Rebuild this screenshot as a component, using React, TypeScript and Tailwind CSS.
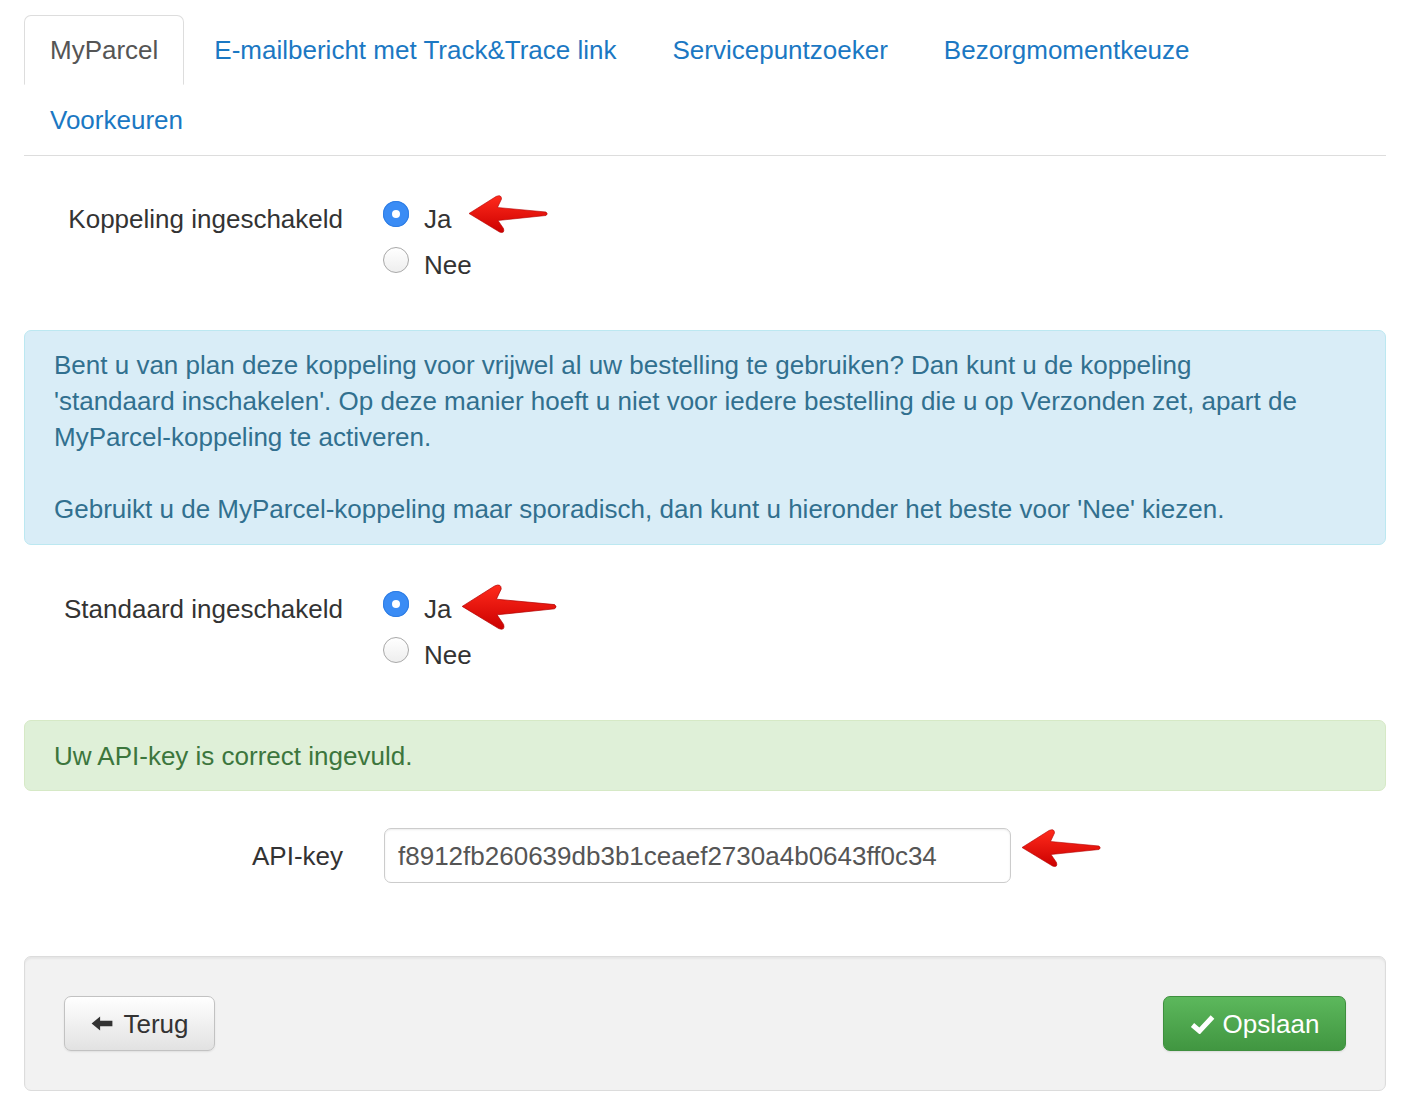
import React from "react";

const tabs = [
  { label: "MyParcel", active: true },
  { label: "E-mailbericht met Track&Trace link" },
  { label: "Servicepuntzoeker" },
  { label: "Bezorgmomentkeuze" },
];

function RedArrow({ className }: { className: string }) {
  return (
    <svg viewBox="0 0 80 40" className={className} aria-hidden>
      <defs>
        <linearGradient id="arrowFill" x1="0" y1="0" x2="0" y2="1">
          <stop offset="0" stopColor="#ff2b1c" />
          <stop offset="1" stopColor="#cc0000" />
        </linearGradient>
      </defs>
      <path
        d="M1 19.5 L28 2.5 Q33.5 0 33.5 5 L29.5 13.5 L78 18 Q80.5 20 78 21.5 L30 26.5 L35.5 34.5 Q37 40 31.5 38 Z"
        fill="url(#arrowFill)"
        stroke="#b30000"
        strokeWidth="0.6"
        strokeLinejoin="round"
      />
    </svg>
  );
}

function Radio({ checked, label }: { checked?: boolean; label: string }) {
  return (
    <div className="flex h-[36px] items-center">
      <span
        className={`-mt-[10px] flex h-[26px] w-[26px] shrink-0 items-center justify-center rounded-full ${
          checked
            ? "bg-[#3a8cf5] shadow-[inset_0_0_0_1px_#2f7de3]"
            : "border border-[#a8a8a8] bg-gradient-to-b from-white to-[#eeeeee]"
        }`}
      >
        {checked ? <span className="h-[8px] w-[8px] rounded-full bg-white" /> : null}
      </span>
      <span className="ml-[15px]">{label}</span>
    </div>
  );
}

function RadioGroup({ title, arrowClass }: { title: string; arrowClass: string }) {
  return (
    <div className="flex">
      <div className="w-[319px] text-right leading-[36px]">{title}</div>
      <div className="ml-[40px] flex flex-col gap-[10px]">
        <div className="relative">
          <Radio checked label="Ja" />
          <RedArrow className={arrowClass} />
        </div>
        <Radio label="Nee" />
      </div>
    </div>
  );
}

export default function App() {
  return (
    <div className="min-h-[1110px] bg-white pl-[24px] pr-[18px] pt-[15px] font-['Liberation_Sans',Arial,sans-serif] text-[26px] leading-[36px] text-[#333]">
      <ul className="flex flex-wrap border-b border-[#dddddd]">
        {tabs.map((tab) => (
          <li key={tab.label} className="mr-[4px]">
            <span
              className={`flex h-[70px] items-center rounded-t-[7px] border px-[25px] ${
                tab.active
                  ? "border-[#dddddd] border-b-transparent bg-white text-[#555]"
                  : "border-transparent text-[#1b78c3]"
              }`}
            >
              {tab.label}
            </span>
          </li>
        ))}
        <li className="h-0 basis-full" />
        <li>
          <span className="flex h-[70px] items-center px-[26px] text-[#1b78c3]">Voorkeuren</span>
        </li>
      </ul>

      <div className="mt-[45px]">
        <RadioGroup
          title="Koppeling ingeschakeld"
          arrowClass="absolute left-[84px] top-[-7px] h-[40px] w-[82px]"
        />
      </div>

      <div className="mt-[47px] rounded-[7px] border border-[#bce8f1] bg-[#d9edf7] px-[29px] pt-[16px] pb-[17px] text-[#31708f]">
        <p>
          Bent u van plan deze koppeling voor vrijwel al uw bestelling te gebruiken? Dan kunt u de koppeling
          <br />
          'standaard inschakelen'. Op deze manier hoeft u niet voor iedere bestelling die u op Verzonden zet, apart de
          <br />
          MyParcel-koppeling te activeren.
        </p>
        <p className="mt-[36px]">
          Gebruikt u de MyParcel-koppeling maar sporadisch, dan kunt u hieronder het beste voor 'Nee' kiezen.
        </p>
      </div>

      <div className="mt-[46px]">
        <RadioGroup
          title="Standaard ingeschakeld"
          arrowClass="absolute left-[78px] top-[-8px] h-[48px] w-[96px]"
        />
      </div>

      <div className="mt-[47px] flex h-[71px] items-center rounded-[7px] border border-[#d6e9c6] bg-[#dff0d8] px-[29px] text-[#3c763d]">
        Uw API-key is correct ingevuld.
      </div>

      <div className="mt-[37px] flex items-center">
        <div className="w-[319px] text-right">API-key</div>
        <div className="relative ml-[41px]">
          <div className="flex h-[55px] w-[627px] items-center rounded-[7px] border border-[#cccccc] bg-white px-[13px] text-[#555] shadow-[inset_0_1px_2px_rgba(0,0,0,0.08)]">
            f8912fb260639db3b1ceaef2730a4b0643ff0c34
          </div>
          <RedArrow className="absolute left-[636px] top-[0px] h-[40px] w-[82px]" />
        </div>
      </div>

      <div className="mt-[73px] flex items-center justify-between rounded-[7px] border border-[#dcdcdc] bg-[#f2f2f2] px-[39px] py-[39px] shadow-[inset_0_2px_2px_rgba(0,0,0,0.05)]">
        <button
          type="button"
          className="flex h-[55px] w-[151px] items-center justify-center gap-[9px] rounded-[7px] border border-[#c2c2c2] bg-gradient-to-b from-white to-[#e2e2e2] text-[#333] shadow-[0_1px_2px_rgba(0,0,0,0.08)]"
        >
          <svg viewBox="0 0 24 18" className="h-[17px] w-[24px]" aria-hidden>
            <path d="M1 9 L10 1.5 L10 6 L23 6 L23 12 L10 12 L10 16.5 Z" fill="#333" />
          </svg>
          <span>Terug</span>
        </button>
        <button
          type="button"
          className="flex h-[55px] w-[183px] items-center justify-center gap-[8px] rounded-[7px] border border-[#3e8f3e] bg-gradient-to-b from-[#5cb85c] to-[#419641] text-white shadow-[0_1px_2px_rgba(0,0,0,0.1)]"
        >
          <svg viewBox="0 0 24 20" className="h-[20px] w-[25px]" aria-hidden>
            <path d="M2 11 L9 17 L22 3" fill="none" stroke="white" strokeWidth="5" strokeLinejoin="miter" />
          </svg>
          <span>Opslaan</span>
        </button>
      </div>
    </div>
  );
}
